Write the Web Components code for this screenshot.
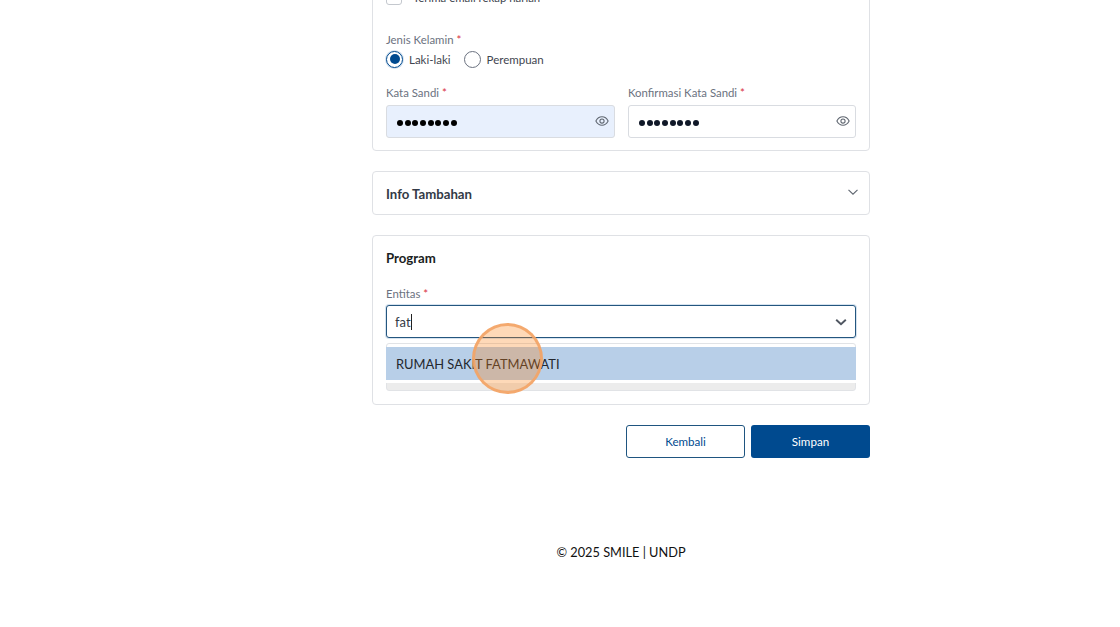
<!DOCTYPE html>
<html>
<head>
<meta charset="utf-8">
<style>
  html, body { margin: 0; padding: 0; height: 100%; overflow: hidden; background: #fff; }
  body { font-family: Lato, "Open Sans", sans-serif; color: #1f2937; }
</style>
</head>
<body>
<app-page>
  <form-card>
    <check-row label="Terima email rekap harian"></check-row>
    <field-group label="Jenis Kelamin" style="margin-top:25px">
      <div style="display:flex;gap:13px;margin-top:-2px">
        <radio-option label="Laki-laki" checked></radio-option>
        <radio-option label="Perempuan"></radio-option>
      </div>
    </field-group>
    <div style="display:grid;grid-template-columns:229px 228px;gap:13px;margin-top:16px">
      <field-group label="Kata Sandi"><password-input filled></password-input></field-group>
      <field-group label="Konfirmasi Kata Sandi"><password-input></password-input></field-group>
    </div>
  </form-card>
  <accordion-card title="Info Tambahan"></accordion-card>
  <form-card class="program">
    <card-title>Program</card-title>
    <field-group label="Entitas" style="margin-top:17px;--label-gap:3px">
      <entity-select value="fat" option="RUMAH SAKIT FATMAWATI"></entity-select>
    </field-group>
  </form-card>
  <form-actions></form-actions>
  <page-footer>© 2025 SMILE | UNDP</page-footer>
  <click-ripple></click-ripple>
</app-page>

<script>
class AppPage extends HTMLElement {
  constructor() {
    super();
    this.attachShadow({ mode: 'open' });
    this.shadowRoot.innerHTML = `<style>
      :host { display: block; position: relative; height: 627px; overflow: hidden; }
      .column {
        width: 498px;
        margin: -26px 0 0 372px;
        display: flex;
        flex-direction: column;
        gap: 20px;
      }
    </style>
    <div class="column"><slot></slot></div>`;
  }
}

class FormCard extends HTMLElement {
  constructor() {
    super();
    this.attachShadow({ mode: 'open' });
    this.shadowRoot.innerHTML = `<style>
      :host {
        display: block;
        box-sizing: border-box;
        border: 1px solid #dfe1e5;
        border-radius: 4px;
        background: #fff;
        padding: 13px 13px 12px 13px;
      }
      :host(.program) { height: 170px; padding-top: 12px; }
    </style><slot></slot>`;
  }
}

class CardTitle extends HTMLElement {
  constructor() {
    super();
    this.attachShadow({ mode: 'open' });
    this.shadowRoot.innerHTML = `<style>
      :host { display: block; font-size: 13.2px; line-height: 20px; font-weight: 700; color: #1a1d21; }
    </style><slot></slot>`;
  }
}

class CheckRow extends HTMLElement {
  connectedCallback() {
    if (this.shadowRoot) return;
    this.attachShadow({ mode: 'open' });
    this.shadowRoot.innerHTML = `<style>
      :host { display: flex; align-items: center; gap: 11px; height: 18px; font-size: 11.4px; color: #3f4650; }
      .box { width: 14px; height: 14px; border: 1px solid #c4c8ce; border-radius: 3px; background: #fff; }
    </style>
    <span class="box"></span><span>${this.getAttribute('label')}</span>`;
  }
}

class FieldGroup extends HTMLElement {
  connectedCallback() {
    if (this.shadowRoot) return;
    this.attachShadow({ mode: 'open' });
    this.shadowRoot.innerHTML = `<style>
      :host { display: block; }
      .label { font-size: 11.4px; line-height: 16px; padding-top: 1px; color: #6b7280; margin-bottom: var(--label-gap, 4px); }
      .req { color: #d9303e; }
    </style>
    <div class="label">${this.getAttribute('label')} <span class="req">*</span></div>
    <slot></slot>`;
  }
}

class RadioOption extends HTMLElement {
  connectedCallback() {
    if (this.shadowRoot) return;
    this.attachShadow({ mode: 'open' });
    const on = this.hasAttribute('checked');
    this.shadowRoot.innerHTML = `<style>
      :host { display: inline-flex; align-items: center; gap: 6px; height: 18px; font-size: 11.5px; color: #3f4650; }
      .dot {
        box-sizing: border-box; width: 17px; height: 17px; border-radius: 50%;
        border: 1px solid #6b7280; background: #fff;
        display: flex; align-items: center; justify-content: center;
      }
      .dot.on { border: 1.5px solid #004a8f; box-shadow: 0 0 0 1px #d4e1ee; }
      .dot.on::after { content: ""; width: 10px; height: 10px; border-radius: 50%; background: #004a8f; }
    </style>
    <span class="dot ${on ? 'on' : ''}"></span><span>${this.getAttribute('label')}</span>`;
  }
}

class PasswordInput extends HTMLElement {
  connectedCallback() {
    if (this.shadowRoot) return;
    this.attachShadow({ mode: 'open' });
    this.shadowRoot.innerHTML = `<style>
      :host {
        display: flex; align-items: center; justify-content: space-between;
        box-sizing: border-box; height: 33px; padding: 0 5px 0 10px;
        border: 1px solid #d9dce1; border-radius: 3px; background: #fff;
      }
      :host([filled]) { background: #e8f0fd; }
      .dots { display: flex; gap: 1.7px; margin-top: 2px; }
      .dots i { width: 6px; height: 6px; border-radius: 50%; background: #101828; }
      :host([filled]) .dots i { background: #000; }
      svg { display: block; margin-top: -1px; }
    </style>
    <span class="dots">${'<i></i>'.repeat(8)}</span>
    <svg width="14" height="14" viewBox="0 0 24 24" fill="none" stroke="#5f6670" stroke-width="1.8">
      <path d="M1.5 12C4 7 7.700 4.800 12 4.800S20 7 22.500 12C20 17 16.300 19.200 12 19.200S4 17 1.500 12Z"/>
      <circle cx="12" cy="12" r="3.600"/>
    </svg>`;
  }
}

class AccordionCard extends HTMLElement {
  connectedCallback() {
    if (this.shadowRoot) return;
    this.attachShadow({ mode: 'open' });
    this.shadowRoot.innerHTML = `<style>
      :host {
        display: flex; align-items: center; justify-content: space-between;
        box-sizing: border-box; height: 44px; padding: 2px 10px 0 13px;
        border: 1px solid #dfe1e5; border-radius: 4px; background: #fff;
        font-size: 13.2px; font-weight: 700; color: #323a46;
      }
      svg { display: block; margin-top: -4px; }
    </style>
    <span>${this.getAttribute('title')}</span>
    <svg width="12" height="12" viewBox="0 0 12 12" fill="none" stroke="#5f6670" stroke-width="1.100">
      <path d="M1.500 3.800 6 8.200l4.500-4.400"/>
    </svg>`;
  }
}

class EntitySelect extends HTMLElement {
  connectedCallback() {
    if (this.shadowRoot) return;
    this.attachShadow({ mode: 'open' });
    this.shadowRoot.innerHTML = `<style>
      :host { display: block; position: relative; }
      .control {
        display: flex; align-items: center; justify-content: space-between;
        box-sizing: border-box; height: 33px; padding: 0 8px 0 8px;
        border: 1.500px solid #24567f; border-radius: 3px; background: #fff;
        box-shadow: 0 0 0 1px #d6e3ef;
        font-size: 13px; color: #333a44;
      }
      .value::after { content: ""; display: inline-block; width: 1px; height: 16px; background: #222; vertical-align: -3px; }
      .menu {
        position: absolute; left: 0; right: 0; top: 38px; height: 48px;
        box-sizing: border-box; border: 1px solid #e1e3e6; border-radius: 3px;
        background: linear-gradient(#fff 39px, #ececec 39px);
      }
      .option {
        position: absolute; left: -1px; right: -1px; top: 3px; height: 33px;
        display: flex; align-items: center; padding-left: 10px;
        background: #b8cfe8; font-size: 12.9px; color: #23272e;
        box-shadow: 0 3px 0 #fff;
      }
      svg { display: block; }
    </style>
    <div class="control">
      <span class="value">${this.getAttribute('value')}</span>
      <svg width="12" height="12" viewBox="0 0 12 12" fill="none" stroke="#4f5661" stroke-width="1.900">
        <path d="M1.200 3.700 6 8.300l4.800-4.600"/>
      </svg>
    </div>
    <div class="menu"><div class="option">${this.getAttribute('option')}</div></div>`;
  }
}

class FormActions extends HTMLElement {
  constructor() {
    super();
    this.attachShadow({ mode: 'open' });
    this.shadowRoot.innerHTML = `<style>
      :host { display: flex; justify-content: flex-end; gap: 6px; }
      button {
        box-sizing: border-box; height: 33px; border-radius: 3px;
        font: 11.6px Lato, sans-serif; padding: 0;
      }
      .back { width: 119px; background: #fff; color: #004a8f; border: 1px solid #1f5580; }
      .save { width: 119px; background: #004a8f; color: #fff; border: none; }
    </style>
    <button class="back">Kembali</button>
    <button class="save">Simpan</button>`;
  }
}

class PageFooter extends HTMLElement {
  constructor() {
    super();
    this.attachShadow({ mode: 'open' });
    this.shadowRoot.innerHTML = `<style>
      :host {
        display: block; margin-top: 64px; text-align: center;
        font-size: 12.75px; line-height: 20px; color: #111;
      }
    </style><slot></slot>`;
  }
}

// the orange click marker lies over the dropdown
class ClickRipple extends HTMLElement {
  constructor() {
    super();
    this.attachShadow({ mode: 'open' });
    this.shadowRoot.innerHTML = `<style>
      :host {
        position: absolute; left: 471.5px; top: 323px;
        box-sizing: border-box; width: 71px; height: 71px; border-radius: 50%;
        background: rgba(253, 130, 20, 0.3);
        border: 3px solid rgba(243, 164, 102, 0.9);
      }
    </style>`;
  }
}

customElements.define('app-page', AppPage);
customElements.define('form-card', FormCard);
customElements.define('card-title', CardTitle);
customElements.define('check-row', CheckRow);
customElements.define('field-group', FieldGroup);
customElements.define('radio-option', RadioOption);
customElements.define('password-input', PasswordInput);
customElements.define('accordion-card', AccordionCard);
customElements.define('entity-select', EntitySelect);
customElements.define('form-actions', FormActions);
customElements.define('page-footer', PageFooter);
customElements.define('click-ripple', ClickRipple);
</script>
</body>
</html>
